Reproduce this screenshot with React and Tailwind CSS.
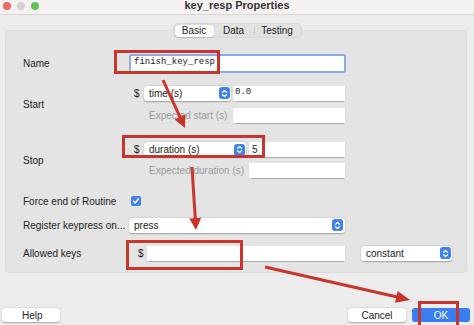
import React from "react";

const RED = "#c8352c";

// blue up/down stepper used in mac popup buttons
const Stepper = () => (
  <span className="flex h-[12px] w-[11px] items-center justify-center rounded-[3px] bg-[#3d82f0]">
    <svg width="7" height="9" viewBox="0 0 7 9" fill="none" stroke="white" strokeWidth="1.2" strokeLinecap="round" strokeLinejoin="round">
      <path d="M1.5 3.3 L3.5 1.5 L5.5 3.3" />
      <path d="M1.5 5.7 L3.5 7.5 L5.5 5.7" />
    </svg>
  </span>
);

const Select = ({ label, className }) => (
  <div className={`flex h-[15px] items-center justify-between rounded-[3px] bg-white pl-[5px] pr-[1px] shadow-[0_0.5px_1.5px_rgba(0,0,0,0.3)] ${className}`}>
    <span>{label}</span>
    <Stepper />
  </div>
);

const Input = ({ value, mono, className }) => (
  <div
    className={`flex h-[15px] items-center bg-white pl-[2px] shadow-[0_0.5px_1px_rgba(0,0,0,0.25)] ${className}`}
    style={mono ? { fontFamily: '"Liberation Mono", monospace', fontSize: "9px" } : undefined}
  >
    {value}
  </div>
);

const Arrow = ({ x1, y1, x2, y2, head = 12, half = 6 }) => {
  const len = Math.hypot(x2 - x1, y2 - y1);
  const dx = (x2 - x1) / len;
  const dy = (y2 - y1) / len;
  const bx = x2 - dx * head;
  const by = y2 - dy * head;
  const px = -dy * half;
  const py = dx * half;
  return (
    <g>
      <line x1={x1} y1={y1} x2={bx + dx * 2} y2={by + dy * 2} stroke={RED} strokeWidth="3" />
      <polygon points={`${x2},${y2} ${bx + px},${by + py} ${bx - px},${by - py}`} fill={RED} />
    </g>
  );
};

const Box = ({ x, y, w, h }) => (
  <div
    className="pointer-events-none absolute border-[3px] border-[#c8352c]"
    style={{ left: x, top: y, width: w, height: h }}
  />
);

export default function App() {
  return (
    <div
      className="relative h-[325px] w-[474px] overflow-hidden bg-[#ececec] text-[10px] text-[#222]"
      style={{ fontFamily: '"Liberation Sans", Arial, sans-serif' }}
    >
      {/* title bar */}
      <div className="relative flex h-[15px] items-center justify-center border-b border-[#d9d6d6] bg-[#f5f1f1]">
        <div className="absolute left-[3px] top-[2px] flex gap-[6px]">
          <span className="h-[8px] w-[8px] rounded-full bg-[#ec6a5e]" />
          <span className="h-[8px] w-[8px] rounded-full bg-[#d3d1d1]" />
          <span className="h-[8px] w-[8px] rounded-full bg-[#5fc453]" />
        </div>
        <span className="-mt-[3px] text-[11px] font-bold text-[#333]">key_resp Properties</span>
      </div>

      {/* tabs */}
      <div className="relative z-10 mt-[8px] flex justify-center">
        <div className="flex h-[15px] items-center rounded-[5px] border border-[#d6d6d6] bg-[#e2e2e2] px-[1px] text-[10px]">
          <span className="flex h-[12px] w-[39px] items-center justify-center rounded-[4px] bg-white shadow-[0_0.5px_1.5px_rgba(0,0,0,0.25)]">Basic</span>
          <span className="flex w-[40px] items-center justify-center">Data</span>
          <span className="h-[8px] w-px bg-[#cfcfcf]" />
          <span className="flex w-[45px] items-center justify-center">Testing</span>
        </div>
      </div>

      {/* panel */}
      <div className="mx-[5px] -mt-[8px] flex w-[462px] flex-col rounded-[4px] border border-[#dcdcdc] bg-[#e4e4e4] pb-[11px] pl-[17px]">
        {/* Name */}
        <div className="mt-[22px] flex h-[20px] items-center">
          <span className="w-[106px]">Name</span>
          <div
            className="flex h-[19px] w-[217px] items-center rounded-[2px] border-2 border-[#8fa9e8] bg-white pl-[3px]"
            style={{ fontFamily: '"Liberation Mono", monospace', fontSize: "9px" }}
          >
            finish_key_resp
          </div>
        </div>

        {/* Start */}
        <div className="mt-[12px] flex h-[38px] items-center">
          <span className="w-[106px]">Start</span>
          <div className="flex flex-col gap-[6px]">
            <div className="flex h-[16px] items-center">
              <span className="w-[15px] pl-[5px]">$</span>
              <Select label="time (s)" className="w-[87px]" />
              <Input value="0.0" mono className="ml-[2px] w-[112px]" />
            </div>
            <div className="flex h-[16px] items-center">
              <span className="w-[104px] pl-[20px] text-[#9a9a9a]">Expected start (s)</span>
              <Input className="w-[112px]" />
            </div>
          </div>
        </div>

        {/* Stop */}
        <div className="mt-[18px] flex h-[38px] items-center">
          <span className="w-[106px]">Stop</span>
          <div className="flex flex-col gap-[5px]">
            <div className="flex h-[16px] items-center">
              <span className="w-[15px] pl-[5px]">$</span>
              <Select label="duration (s)" className="w-[102px]" />
              <Input value="5" className="ml-[3px] w-[96px] pl-[3px]" />
            </div>
            <div className="flex h-[16px] items-center">
              <span className="w-[120px] pl-[20px] text-[#9a9a9a]">Expected duration (s)</span>
              <Input className="w-[96px]" />
            </div>
          </div>
        </div>

        {/* Force end */}
        <div className="mt-[16px] flex h-[12px] items-center">
          <span className="w-[108px]">Force end of Routine</span>
          <span className="flex h-[10px] w-[10px] items-center justify-center rounded-[2px] bg-[#3d82f0]">
            <svg width="8" height="8" viewBox="0 0 8 8" fill="none" stroke="white" strokeWidth="1.4" strokeLinecap="round" strokeLinejoin="round">
              <path d="M1.5 4.2 L3.2 6 L6.5 1.8" />
            </svg>
          </span>
        </div>

        {/* Register keypress */}
        <div className="mt-[10px] flex h-[16px] items-center">
          <span className="w-[106px]">Register keypress on...</span>
          <Select label="press" className="w-[216px] pr-[2px]" />
        </div>

        {/* Allowed keys */}
        <div className="mt-[12px] flex h-[16px] items-center">
          <span className="w-[106px]">Allowed keys</span>
          <span className="w-[18px] pl-[9px]">$</span>
          <Input className="w-[198px]" />
          <Select label="constant" className="ml-[16px] w-[91px]" />
        </div>
      </div>

      {/* bottom buttons */}
      <div className="mt-[35px] flex items-center justify-between pl-[2px] pr-[4px]">
        <span className="flex h-[14px] w-[58px] items-center rounded-[3px] bg-white pl-[20px] shadow-[0_0.5px_1.5px_rgba(0,0,0,0.3)]">Help</span>
        <div className="flex gap-[6px]">
          <span className="flex h-[14px] w-[58px] items-center justify-center rounded-[3px] bg-white shadow-[0_0.5px_1.5px_rgba(0,0,0,0.3)]">Cancel</span>
          <span className="flex h-[14px] w-[58px] items-center justify-center rounded-[3px] bg-[#3a7ff2] text-white">OK</span>
        </div>
      </div>

      {/* annotations */}
      <Box x={114} y={50} w={106} h={24} />
      <Box x={122} y={135} w={143} h={23} />
      <Box x={126} y={240} w={117} h={30} />
      <Box x={418} y={301} w={41} h={28} />
      <svg className="pointer-events-none absolute left-0 top-0" width="474" height="325">
        <Arrow x1={163} y1={80} x2={185} y2={128} />
        <Arrow x1={192} y1={167} x2={196} y2={230} />
        <Arrow x1={265} y1={267} x2={410} y2={300} head={14} />
      </svg>
    </div>
  );
}
